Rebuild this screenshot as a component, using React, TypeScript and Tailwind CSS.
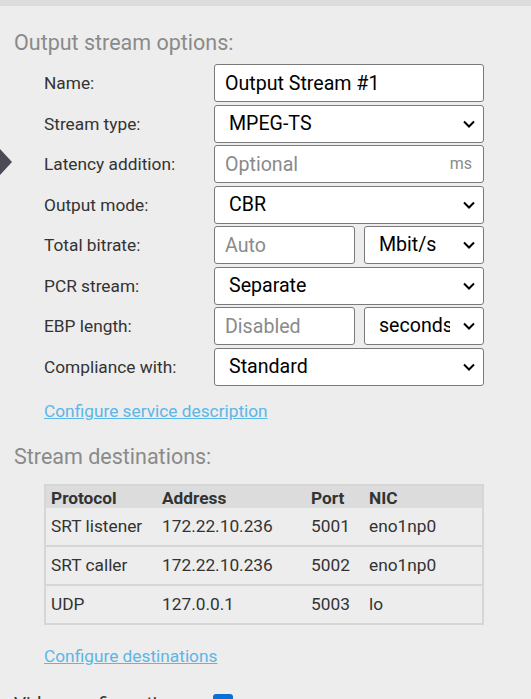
import React from "react";

const font = { fontFamily: "Roboto, 'Liberation Sans', sans-serif" };

function Chevron() {
  return (
    <svg
      viewBox="0 0 12 8"
      className="pointer-events-none absolute right-[9px] top-1/2 h-[8px] w-[12px] -translate-y-1/2"
    >
      <path d="M1 1.5 L6 6.5 L11 1.5" fill="none" stroke="#000" strokeWidth="2" />
    </svg>
  );
}

function TextBox({ value, placeholder, suffix }: { value?: string; placeholder?: string; suffix?: string }) {
  return (
    <div className="relative h-full w-full">
      <input
        readOnly
        value={value ?? ""}
        placeholder={placeholder}
        className="h-full w-full rounded-[3px] border border-[#7a7a7a] bg-white pl-[10px] text-[19.6px] text-black outline-none placeholder:text-[#8a8a8a]"
      />
      {suffix && (
        <span className="pointer-events-none absolute right-[12px] top-1/2 -translate-y-1/2 text-[16px] text-[#8a8a8a]">
          {suffix}
        </span>
      )}
    </div>
  );
}

function Select({ value }: { value: string }) {
  return (
    <div className="relative h-full w-full">
      <select
        defaultValue={value}
        className="h-full w-full appearance-none rounded-[3px] border border-[#7a7a7a] bg-white pl-[14px] pr-[33px] text-[19.6px] text-black outline-none"
      >
        <option>{value}</option>
      </select>
      <Chevron />
    </div>
  );
}

function Row({ label, children }: { label: string; children: React.ReactNode }) {
  return (
    <div className="flex h-[38px] items-center">
      <div className="w-[170px] pt-[2px] text-[17.3px] text-[#333]">{label}</div>
      <div className="flex h-full w-[270px] gap-[9px]">{children}</div>
    </div>
  );
}

const destinations = [
  { protocol: "SRT listener", address: "172.22.10.236", port: "5001", nic: "eno1np0" },
  { protocol: "SRT caller", address: "172.22.10.236", port: "5002", nic: "eno1np0" },
  { protocol: "UDP", address: "127.0.0.1", port: "5003", nic: "lo" },
];

export default function App() {
  return (
    <div className="relative min-h-screen w-full overflow-hidden bg-[#ededed]" style={font}>
      <div className="h-[6px] bg-[#dcdcdc]" />

      {/* side marker */}
      <svg viewBox="0 0 12 26" className="absolute left-0 top-[149px] h-[26px] w-[12px]">
        <path d="M0 0 L12 13 L0 26 Z" fill="#4b4b55" />
      </svg>

      <div className="px-[14px]">
        <h2 className="mt-[25px] text-[21.5px] leading-[24px] text-[#8a8a8a]">Output stream options:</h2>

        <div className="ml-[30px] mt-[9px] flex flex-col gap-y-[2.5px]">
          <Row label="Name:">
            <TextBox value="Output Stream #1" />
          </Row>
          <Row label="Stream type:">
            <Select value="MPEG-TS" />
          </Row>
          <Row label="Latency addition:">
            <TextBox placeholder="Optional" suffix="ms" />
          </Row>
          <Row label="Output mode:">
            <Select value="CBR" />
          </Row>
          <Row label="Total bitrate:">
            <div className="h-full w-[141px] shrink-0">
              <TextBox placeholder="Auto" />
            </div>
            <div className="h-full flex-1">
              <Select value="Mbit/s" />
            </div>
          </Row>
          <Row label="PCR stream:">
            <Select value="Separate" />
          </Row>
          <Row label="EBP length:">
            <div className="h-full w-[141px] shrink-0">
              <TextBox placeholder="Disabled" />
            </div>
            <div className="h-full flex-1">
              <Select value="seconds" />
            </div>
          </Row>
          <Row label="Compliance with:">
            <Select value="Standard" />
          </Row>

          <a className="mt-[13px] self-start text-[17.3px] leading-[20px] text-[#5cb6e6] underline">
            Configure service description
          </a>
        </div>

        <h2 className="mt-[23px] text-[21.5px] leading-[26px] text-[#8a8a8a]">Stream destinations:</h2>

        <div className="ml-[30px] mt-[14px] w-[440px] border-2 border-[#d6d6d6] text-[17.3px] text-[#333]">
          <div className="grid h-[22px] grid-cols-[111px_149px_58px_1fr] items-center bg-[#dcdcdc] font-bold">
            <div className="pl-[5px]">Protocol</div>
            <div className="pl-[5px]">Address</div>
            <div className="pl-[5px]">Port</div>
            <div className="pl-[5px]">NIC</div>
          </div>
          {destinations.map((d, i) => (
            <div
              key={d.port}
              className={
                i < destinations.length - 1
                  ? "grid h-[39px] grid-cols-[111px_149px_58px_1fr] items-center border-b-2 border-[#d6d6d6]"
                  : "grid h-[37px] grid-cols-[111px_149px_58px_1fr] items-center"
              }
            >
              <div className="pl-[5px]">{d.protocol}</div>
              <div className="pl-[5px]">{d.address}</div>
              <div className="pl-[5px]">{d.port}</div>
              <div className="pl-[5px]">{d.nic}</div>
            </div>
          ))}
        </div>

        <a className="ml-[30px] mt-[21px] block w-fit text-[17.3px] leading-[20px] text-[#5cb6e6] underline">
          Configure destinations
        </a>

        <div className="mt-[24px] flex items-center">
          <span className="w-[199px] text-[19px] text-[#333]">Video configuration:</span>
          <span className="h-[20px] w-[20px] rounded-[3px] bg-[#0b6fd6]" />
        </div>
      </div>
    </div>
  );
}
